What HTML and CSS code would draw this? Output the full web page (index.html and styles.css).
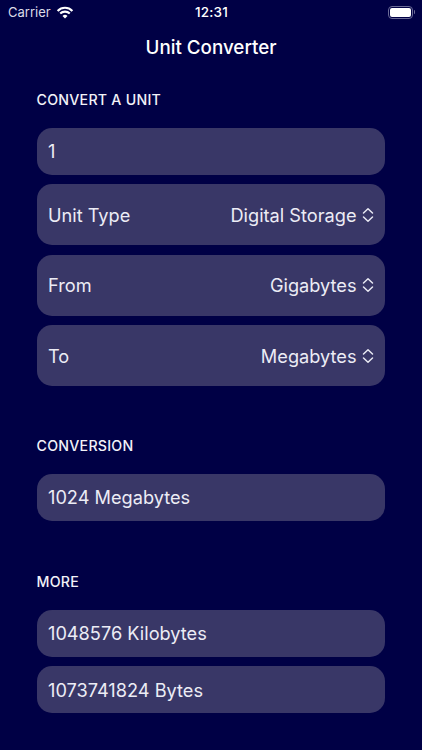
FILE: index.html
```html
<!DOCTYPE html>
<html lang="en">
<head>
<meta charset="utf-8">
<title>Unit Converter</title>
<link rel="stylesheet" href="styles.css">
</head>
<body>
<div class="screen">
  <div class="status">
    <div class="status-left">
      <span class="carrier">Carrier</span>
      <svg class="wifi" width="18" height="13" viewBox="0 0 18 13"><path d="M9 12.600 6.500 10a3.600 3.600 0 0 1 5 0Z" fill="#fff"/><path d="M4.200 7.600a6.800 6.800 0 0 1 9.600 0M1.600 4.900a10.400 10.400 0 0 1 14.800 0" stroke="#fff" stroke-width="2.100" fill="none"/></svg>
    </div>
    <span class="time">12:31</span>
    <div class="status-right">
      <span class="battery"><span class="battery-fill"></span></span><span class="battery-cap"></span>
    </div>
  </div>
  <h1 class="title">Unit Converter</h1>

  <section class="group group-first">
    <h2 class="label">CONVERT A UNIT</h2>
    <div class="rows">
      <div class="row row-input">1</div>
      <div class="row row-picker"><span>Unit Type</span><span class="value">Digital Storage<svg class="chev" width="12" height="16" viewBox="0 0 12 16"><path d="M1.500 6 6 1.800 10.500 6M1.500 10 6 14.200 10.500 10" stroke="#e8e8f2" stroke-width="1.500" fill="none" stroke-linecap="round" stroke-linejoin="round"/></svg></span></div>
      <div class="row row-picker"><span>From</span><span class="value">Gigabytes<svg class="chev" width="12" height="16" viewBox="0 0 12 16"><path d="M1.500 6 6 1.800 10.500 6M1.500 10 6 14.200 10.500 10" stroke="#e8e8f2" stroke-width="1.500" fill="none" stroke-linecap="round" stroke-linejoin="round"/></svg></span></div>
      <div class="row row-picker"><span>To</span><span class="value">Megabytes<svg class="chev" width="12" height="16" viewBox="0 0 12 16"><path d="M1.500 6 6 1.800 10.500 6M1.500 10 6 14.200 10.500 10" stroke="#e8e8f2" stroke-width="1.500" fill="none" stroke-linecap="round" stroke-linejoin="round"/></svg></span></div>
    </div>
  </section>

  <section class="group group-conversion">
    <h2 class="label">CONVERSION</h2>
    <div class="rows">
      <div class="row row-result">1024 Megabytes</div>
    </div>
  </section>

  <section class="group group-more">
    <h2 class="label">MORE</h2>
    <div class="rows">
      <div class="row row-result">1048576 Kilobytes</div>
      <div class="row row-result">1073741824 Bytes</div>
    </div>
  </section>
</div>
</body>
</html>
```
FILE: styles.css
```css
* { box-sizing: border-box; }
html, body { margin: 0; padding: 0; }
body {
  width: 422px;
  height: 750px;
  overflow: hidden;
  background: #000045;
  color: #fff;
  font-family: Inter, "Liberation Sans", sans-serif;
}
.screen { display: flex; flex-direction: column; height: 750px; }
.status {
  height: 24px;
  padding: 0 7px 0 8px;
  display: grid;
  grid-template-columns: 1fr auto 1fr;
  align-items: center;
}
.status-left { display: flex; align-items: center; gap: 5px; }
.carrier { font-size: 13px; color: #dcdce8; }
.time { font-size: 13.5px; font-weight: 500; letter-spacing: 0.2px; }
.status-right { display: flex; justify-content: flex-end; align-items: center; }
.battery {
  width: 25px;
  height: 13px;
  border: 1.5px solid #6a6a96;
  border-radius: 4px;
  padding: 1px;
  display: block;
}
.battery-fill { display: block; width: 100%; height: 100%; background: #fff; border-radius: 2px; }
.battery-cap { width: 1.5px; height: 4px; margin-left: 1px; background: #6a6a96; border-radius: 0 1px 1px 0; }
.title {
  margin: 12px 0 0;
  height: 24px;
  line-height: 24px;
  text-align: center;
  font-size: 18.8px;
  font-weight: 500;
}
.group { padding: 0 37px 0 36.5px; }
.group-first { margin-top: 31.7px; }
.group-conversion { margin-top: 51.8px; }
.group-more { margin-top: 52.800px; }
.label {
  margin: 0 0 20px;
  height: 16px;
  line-height: 16px;
  font-size: 14.2px;
  font-weight: 500;
  letter-spacing: 0.25px;
  color: #f2f2f8;
}
.rows { display: flex; flex-direction: column; gap: 9.5px; }
.row {
  background: #393767;
  border-radius: 15px;
  padding: 0 11.5px;
  font-size: 18.2px;
  color: #ececf5;
  display: flex;
  align-items: center;
}
.row-input { height: 47px; }
.row-picker { height: 61px; justify-content: space-between; }
.row-result { height: 47px; }
.value { display: flex; align-items: center; gap: 5px; }
.chev { display: block; }
```
